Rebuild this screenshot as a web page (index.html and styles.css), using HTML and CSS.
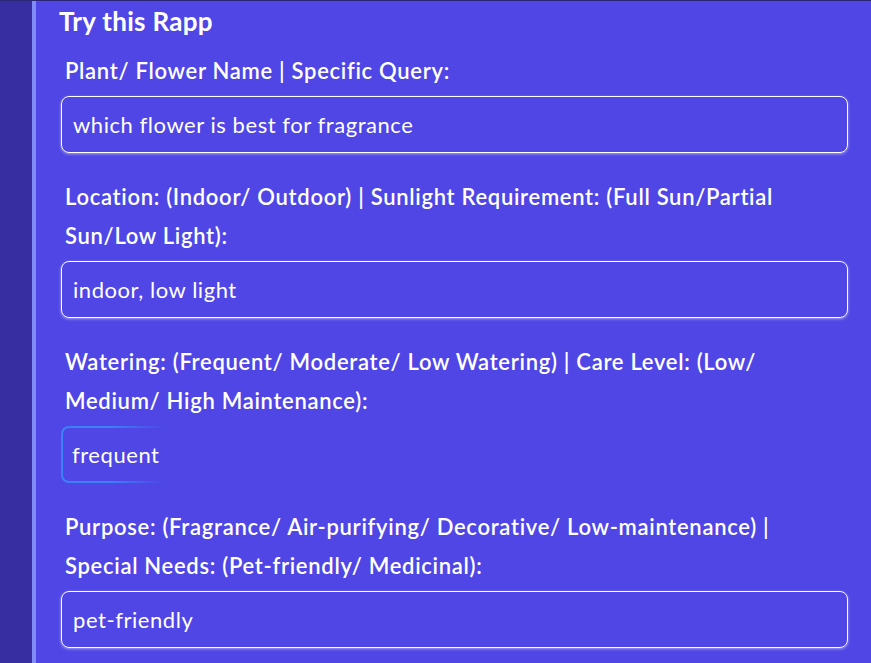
FILE: index.html
```html
<!DOCTYPE html>
<html lang="en">
<head>
  <meta charset="UTF-8">
  <title>Try this Rapp</title>
  <link rel="stylesheet" href="styles.css">
</head>
<body>
  <div class="page">
    <aside class="sidebar"></aside>

    <main class="rapp">
      <h2>Try this Rapp</h2>

      <form class="fields">
        <div class="field">
          <label for="q1">Plant/ Flower Name | Specific Query:</label>
          <input id="q1" type="text" value="which flower is best for fragrance">
        </div>

        <div class="field">
          <label for="q2">Location: (Indoor/ Outdoor) | Sunlight Requirement: (Full Sun/Partial Sun/Low Light):</label>
          <input id="q2" type="text" value="indoor, low light">
        </div>

        <div class="field">
          <label for="q3">Watering: (Frequent/ Moderate/ Low Watering) | Care Level: (Low/ Medium/ High Maintenance):</label>
          <input id="q3" class="active" type="text" value="frequent">
        </div>

        <div class="field">
          <label for="q4">Purpose: (Fragrance/ Air-purifying/ Decorative/ Low-maintenance) | Special Needs: (Pet-friendly/ Medicinal):</label>
          <input id="q4" type="text" value="pet-friendly">
        </div>
      </form>
    </main>
  </div>
</body>
</html>
```

FILE: styles.css
```css
body {
  margin: 0;
  font-family: Lato, "Open Sans", sans-serif;
  background-color: #4f46e5;
  color: white;
}

.page {
  display: flex;
  height: 663px;
  border-top: 1px solid #2b2777;
  box-sizing: border-box;
  overflow: hidden;
}

.sidebar {
  width: 32px;
  flex-shrink: 0;
  background-color: #372fa1;
}

.rapp {
  flex: 1;
  background-color: #4f46e5;
  border-left: 4px solid #818cf8;
  padding: 0 23px 0 25px;
}

.rapp h2 {
  margin: 0 0 0 -2px;
  font-size: 26px;
  font-weight: 700;
  letter-spacing: 0.3px;
  line-height: 40px;
}

.fields {
  display: flex;
  flex-direction: column;
  gap: 24px;
  margin-top: 10px;
}

.field {
  display: flex;
  flex-direction: column;
  gap: 6px;
}

.field label {
  padding: 0 6px 0 4px;
  font-size: 22px;
  font-weight: 600;
  letter-spacing: 0.7px;
  line-height: 39px;
}

.field input {
  height: 57px;
  box-sizing: border-box;
  padding: 0 11px;
  font-family: inherit;
  font-size: 22px;
  letter-spacing: 0.55px;
  color: white;
  background: transparent;
  border: 1.5px solid white;
  border-radius: 8px;
  box-shadow: 0 1px 3px rgba(255, 255, 255, 0.5);
  outline: none;
}

/* field that is being focused: border fades in from the left */
.field input.active {
  padding: 0 9px;
  border: 2px solid transparent;
  background:
    linear-gradient(#4f46e5, #4f46e5) padding-box,
    linear-gradient(90deg, #3b82f6 0, #3b82f6 50px, rgba(79, 70, 229, 0) 105px) border-box;
  box-shadow: none;
}
```
